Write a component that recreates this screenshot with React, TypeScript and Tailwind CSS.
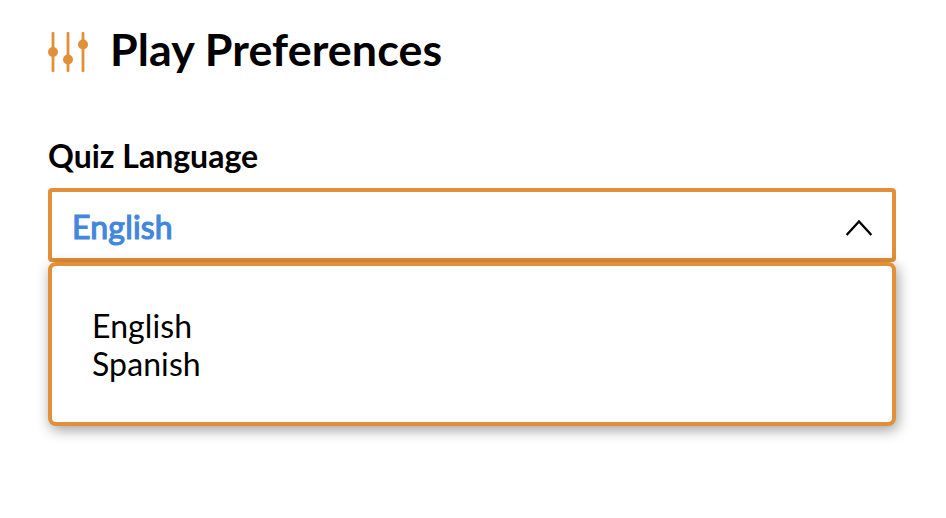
import { useState } from "react"

const languages = ["English", "Spanish"]

function SlidersIcon() {
  return (
    <svg viewBox="0 0 40 40" className="h-10 w-10 shrink-0" fill="#e28f38">
      <rect x="3.6" y="0" width="2.8" height="40" rx="1" />
      <rect x="18.6" y="0" width="2.8" height="40" rx="1" />
      <rect x="33.6" y="0" width="2.8" height="40" rx="1" />
      <circle cx="5" cy="20" r="5" />
      <circle cx="20" cy="27.5" r="5" />
      <circle cx="35" cy="12.5" r="5" />
    </svg>
  )
}

export default function App() {
  const [selected, setSelected] = useState("English")
  const [open, setOpen] = useState(true)

  return (
    <main className="min-h-screen bg-white px-12 pt-5 font-['Lato',sans-serif] text-black">
      <header className="flex h-16 items-center gap-[22px]">
        <SlidersIcon />
        <h1 className="pb-[7px] text-[44.8px] leading-[60px] font-bold tracking-[0.1px]">Play Preferences</h1>
      </header>

      <section className="mt-[52px] w-[848px]">
        <h2 className="h-[52px] text-[32px] leading-[40px] font-bold">Quiz Language</h2>
        <button
          type="button"
          onClick={() => setOpen(!open)}
          className="flex h-[74px] w-full items-center justify-between rounded-[4px] border-4 border-[#e28f38] pt-1 pr-[19px] pl-5"
        >
          <span className="text-[32px] leading-[40px] tracking-[0.2px] text-[#4287dc] [-webkit-text-stroke:1.2px_#4287dc]">
            {selected}
          </span>
          <svg viewBox="0 0 28 18" className="h-[18px] w-7" fill="none" stroke="black" strokeWidth="2.3">
            <path d="M1.6 17 14 3.5 26.4 17" />
          </svg>
        </button>

        {open && (
          <ul className="h-[164px] rounded-[8px] border-4 border-[#e28f38] bg-white px-10 pt-[41px] shadow-[2px_4px_14px_rgba(0,0,0,0.38)]">
            {languages.map((language) => (
              <li
                key={language}
                onClick={() => setSelected(language)}
                className="cursor-pointer text-[32px] leading-[38px] tracking-[0.1px]"
              >
                {language}
              </li>
            ))}
          </ul>
        )}
      </section>
    </main>
  )
}
